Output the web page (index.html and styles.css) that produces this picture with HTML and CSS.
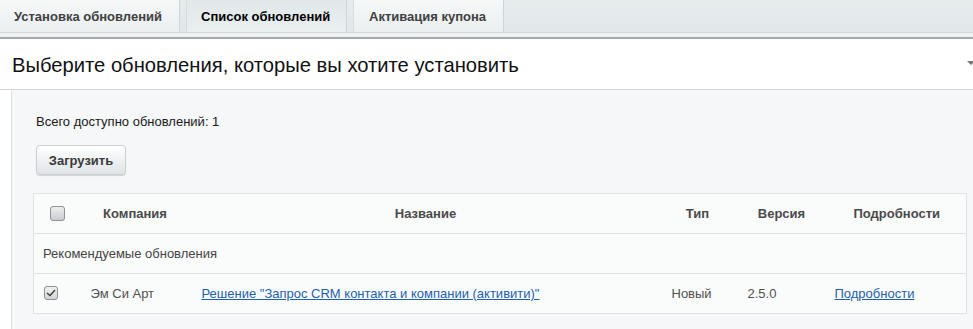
FILE: index.html
```html
<!DOCTYPE html>
<html>
<head>
<meta charset="utf-8">
<link rel="stylesheet" href="styles.css">
</head>
<body>
<div class="tabs">
  <div class="tab">Установка обновлений</div>
  <div class="tab active">Список обновлений</div>
  <div class="tab">Активация купона</div>
</div>
<div class="tabs-foot"></div>
<div class="title-bar">
  <h1 class="title">Выберите обновления, которые вы хотите установить</h1>
  <span class="corner"></span>
</div>
<div class="content">
  <div class="total">Всего доступно обновлений: 1</div>
  <button class="btn">Загрузить</button>
  <table class="grid">
    <colgroup>
      <col class="c1"><col class="c2"><col class="c3"><col class="c4"><col class="c5"><col class="c6">
    </colgroup>
    <thead>
      <tr>
        <th><span class="cb"></span></th>
        <th>Компания</th>
        <th>Название</th>
        <th>Тип</th>
        <th>Версия</th>
        <th>Подробности</th>
      </tr>
    </thead>
    <tbody>
      <tr class="group"><td colspan="6">Рекомендуемые обновления</td></tr>
      <tr>
        <td><span class="cb checked"><svg width="10" height="8" viewBox="0 0 10 8"><path d="M1 4 L4 6.5 L9 1" fill="none" stroke="#3a3a3a" stroke-width="1.3"/></svg></span></td>
        <td>Эм Си Арт</td>
        <td class="name"><a href="#">Решение "Запрос CRM контакта и компании (активити)"</a></td>
        <td>Новый</td>
        <td>2.5.0</td>
        <td><a href="#">Подробности</a></td>
      </tr>
    </tbody>
  </table>
</div>
</body>
</html>
```
FILE: styles.css
```css
* { box-sizing: border-box; }
html, body { margin: 0; padding: 0; }
body {
  width: 973px;
  height: 329px;
  overflow: hidden;
  background: #ffffff;
  font-family: Arial, "Liberation Sans", sans-serif;
  font-size: 13px;
  color: #000;
}
.tabs {
  display: flex;
  gap: 6px;
  height: 32px;
  background: linear-gradient(#e6ebec, #e2e8ea);
}
.tab {
  height: 32px;
  padding: 0 13px 0 13px;
  display: flex;
  align-items: center;
  font-weight: bold;
  font-size: 13px;
  color: #3f3f3f;
  background: linear-gradient(#f6f8f8, #eaeff0);
  border-right: 1px solid #cfd5d7;
  border-left: 1px solid #d7dcde;
}
.tab:first-child { width: 180px; border-left: none; padding-left: 14px; }
.tab.active {
  width: 161px;
  padding-left: 14px;
  color: #000;
  background: linear-gradient(#e1e8ea, #eaeff0);
}
.tab:nth-child(3) { width: 151px; padding-left: 15px; }
.tabs-foot {
  height: 7px;
  background: #eef2f3;
  border-top: 1px solid #d3d9db;
  border-bottom: 2px solid #a6abad;
}
.title-bar {
  position: relative;
  height: 51px;
  background: #fff;
  border-bottom: 1px solid #d2d5d6;
  display: flex;
  align-items: center;
  padding-left: 12px;
}
.title {
  margin: 0;
  font-weight: normal;
  font-size: 20.2px;
  color: #111;
  padding-top: 2px;
}
.corner {
  position: absolute;
  right: -2px;
  top: 22px;
  width: 0;
  height: 0;
  border-left: 4px solid transparent;
  border-right: 4px solid transparent;
  border-top: 4px solid #777;
}
.content {
  margin-left: 11px;
  background: #f5f7f8;
  border-left: 1px solid #dcdfe0;
  padding: 24px 8px 16px 21px;
  height: 239px;
}
.total {
  padding-left: 3px;
  color: #1a1a1a;
  font-size: 13px;
  line-height: 16px;
}
.btn {
  display: block;
  margin: 15px 0 0 3px;
  width: 90px;
  height: 30px;
  font-family: Arial, "Liberation Sans", sans-serif;
  font-size: 13px;
  font-weight: bold;
  color: #3a3a3a;
  background: linear-gradient(#ffffff, #dfe4e6);
  border: 1px solid #c9cfd2;
  border-radius: 4px;
  box-shadow: 0 1px 1px rgba(0,0,0,0.15);
  padding: 0;
}
.grid {
  margin-top: 18px;
  width: 933px;
  border-collapse: collapse;
  table-layout: fixed;
  background: #fafbfb;
  border: 1px solid #dfe2e3;
}
.c1 { width: 45px; }
.c2 { width: 113px; }
.c3 { width: 468px; }
.c4 { width: 76px; }
.c5 { width: 92px; }
.c6 { width: 139px; }
th, td {
  height: 40px;
  padding: 0;
  font-size: 13px;
  vertical-align: middle;
}
th {
  font-weight: bold;
  color: #4a4a4a;
  text-align: center;
  border-bottom: 1px solid #dde1e2;
}
td {
  color: #505050;
  padding-left: 12px;
  text-align: left;
}
td:first-child { padding-left: 10px; }
td.name { padding-left: 10px; }
tr.group td {
  padding-left: 9px;
  color: #444;
  border-bottom: 1px solid #dde1e2;
}
a { color: #1f5fae; text-decoration: underline; }
td:nth-child(6) { padding-left: 7px; }
.cb {
  display: inline-block;
  width: 15px;
  height: 15px;
  border: 1px solid #8c9194;
  border-radius: 3px;
  background: linear-gradient(#eceeef, #c9cdd0);
  vertical-align: middle;
  position: relative;
  top: -1px;
}
th .cb { margin-left: 2px; }
.cb.checked {
  width: 14px;
  height: 14px;
  background: linear-gradient(#f0f1f2, #d2d5d7);
  display: inline-flex;
  align-items: center;
  justify-content: center;
}
```
